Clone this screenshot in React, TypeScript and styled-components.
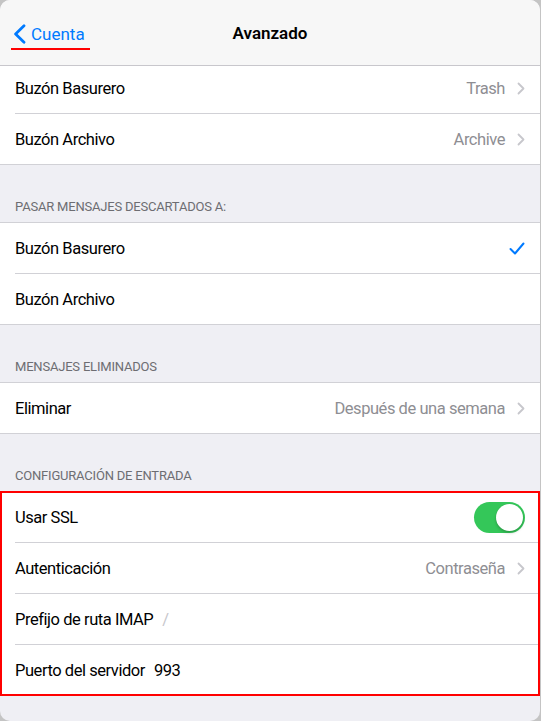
import * as React from 'react';
import styled, { createGlobalStyle } from 'styled-components';

const colors = {
  blue: '#007aff',
  green: '#34c759',
  label: '#000000',
  value: '#8e8e93',
  header: '#6d6d72',
  chevron: '#c7c7cc',
  separator: '#d1d1d6',
  groupBg: '#ffffff',
  pageBg: '#efeff4',
  navBg: '#f7f7f7',
  annotation: '#ff0000'
};

const GlobalStyle = createGlobalStyle`
  html, body {
    margin: 0;
    padding: 0;
    background: #c4c4c4;
  }
  body {
    font-family: Roboto, "Noto Sans", "Liberation Sans", sans-serif;
    -webkit-font-smoothing: antialiased;
  }
`;

interface RowData {
  label: string;
  value?: string;
  chevron?: boolean;
  checked?: boolean;
  toggle?: boolean;
  inline?: string;
  placeholder?: boolean;
}

interface SectionData {
  header?: string;
  rows: RowData[];
  highlight?: boolean;
}

const sections: SectionData[] = [
  {
    rows: [
      { label: 'Buzón Basurero', value: 'Trash', chevron: true },
      { label: 'Buzón Archivo', value: 'Archive', chevron: true }
    ]
  },
  {
    header: 'PASAR MENSAJES DESCARTADOS A:',
    rows: [{ label: 'Buzón Basurero', checked: true }, { label: 'Buzón Archivo' }]
  },
  {
    header: 'MENSAJES ELIMINADOS',
    rows: [{ label: 'Eliminar', value: 'Después de una semana', chevron: true }]
  },
  {
    header: 'CONFIGURACIÓN DE ENTRADA',
    highlight: true,
    rows: [
      { label: 'Usar SSL', toggle: true },
      { label: 'Autenticación', value: 'Contraseña', chevron: true },
      { label: 'Prefijo de ruta IMAP', inline: '/', placeholder: true },
      { label: 'Puerto del servidor', inline: '993' }
    ]
  }
];

const BackChevron = () => (
  <svg width="13" height="20" viewBox="0 0 13 20">
    <path
      d="M11 1.8 L2.6 10 L11 18.2"
      fill="none"
      stroke={colors.blue}
      strokeWidth="2.8"
      strokeLinecap="round"
      strokeLinejoin="round"
    />
  </svg>
);

const Disclosure = () => (
  <svg width="8" height="13" viewBox="0 0 8 13">
    <path
      d="M1.5 1.5 L6.5 6.5 L1.5 11.5"
      fill="none"
      stroke={colors.chevron}
      strokeWidth="1.8"
      strokeLinecap="round"
      strokeLinejoin="round"
    />
  </svg>
);

const Check = () => (
  <svg width="16" height="13" viewBox="0 0 16 13">
    <path
      d="M1.5 7 L6 11.5 L14.5 1.5"
      fill="none"
      stroke={colors.blue}
      strokeWidth="2"
      strokeLinecap="round"
      strokeLinejoin="round"
    />
  </svg>
);

const SettingsRow: React.FC<{ row: RowData }> = ({ row }) => (
  <Row>
    <RowInner>
      <Label>
        {row.label}
        {row.inline && <Inline placeholder={row.placeholder}>{row.inline}</Inline>}
      </Label>
      <Accessory>
        {row.value && <Value>{row.value}</Value>}
        {row.chevron && <Disclosure />}
        {row.checked && <Check />}
        {row.toggle && (
          <Track>
            <Knob />
          </Track>
        )}
      </Accessory>
    </RowInner>
  </Row>
);

const App: React.FC = () => (
  <>
    <GlobalStyle />
    <Card>
      <NavBar>
        <BackButton>
          <BackChevron />
          <BackText>Cuenta</BackText>
        </BackButton>
        <Title>Avanzado</Title>
        <span />
      </NavBar>
      <Scroll>
        <Content>
          {sections.map((section, i) => (
            <React.Fragment key={i}>
              {section.header && <SectionHeader>{section.header}</SectionHeader>}
              <Group highlight={section.highlight}>
                {section.rows.map(row => (
                  <SettingsRow key={row.label} row={row} />
                ))}
              </Group>
            </React.Fragment>
          ))}
        </Content>
      </Scroll>
    </Card>
  </>
);

export default App;

const Card = styled.div`
  width: 540px;
  height: 721px;
  border-radius: 10px;
  overflow: hidden;
  background: ${colors.pageBg};
  display: flex;
  flex-direction: column;
`;

const NavBar = styled.div`
  flex: 0 0 auto;
  height: 65px;
  border-bottom: 1px solid #c8c7cc;
  background: ${colors.navBg};
  display: grid;
  grid-template-columns: 1fr auto 1fr;
  align-items: center;
`;

const BackButton = styled.div`
  justify-self: start;
  margin-left: 11px;
  display: inline-flex;
  align-items: center;
  gap: 5px;
  padding: 8px 5px 3px 2px;
  border-bottom: 2px solid ${colors.annotation};
`;

const BackText = styled.span`
  font-size: 17px;
  line-height: 22px;
  color: ${colors.blue};
`;

const Title = styled.div`
  font-size: 17px;
  line-height: 22px;
  font-weight: 600;
  color: ${colors.label};
`;

const Scroll = styled.div`
  flex: 1 1 auto;
  overflow: hidden;
`;

const Content = styled.div`
  margin-top: -4px;
`;

const SectionHeader = styled.div`
  padding: 34px 15px 7px;
  font-size: 13px;
  line-height: 16px;
  letter-spacing: -0.2px;
  color: ${colors.header};
`;

const Group = styled.div<{ highlight?: boolean }>`
  background: ${colors.groupBg};
  border-top: 1px solid ${colors.separator};
  border-bottom: 1px solid ${colors.separator};
  outline: ${props => (props.highlight ? `2px solid ${colors.annotation}` : 'none')};
  outline-offset: -2px;
`;

const Row = styled.div`
  padding-left: 15px;

  &:last-child > div {
    border-bottom: none;
  }
`;

const RowInner = styled.div`
  height: 50px;
  border-bottom: 1px solid ${colors.separator};
  padding-right: 15px;
  display: flex;
  align-items: center;
  justify-content: space-between;
`;

const Label = styled.div`
  font-size: 16.5px;
  letter-spacing: -0.45px;
  color: ${colors.label};
  display: flex;
  align-items: center;
  gap: 9px;
`;

const Inline = styled.span<{ placeholder?: boolean }>`
  color: ${props => (props.placeholder ? colors.chevron : colors.label)};
`;

const Accessory = styled.div`
  display: flex;
  align-items: center;
  gap: 12px;
`;

const Value = styled.span`
  font-size: 16.5px;
  letter-spacing: -0.45px;
  color: ${colors.value};
`;

const Track = styled.div`
  width: 51px;
  height: 31px;
  box-sizing: border-box;
  padding: 2px;
  border-radius: 16px;
  background: ${colors.green};
  display: flex;
  justify-content: flex-end;
`;

const Knob = styled.div`
  width: 27px;
  height: 27px;
  border-radius: 50%;
  background: #ffffff;
  box-shadow: 0 2px 3px rgba(0, 0, 0, 0.2), 0 0 1px rgba(0, 0, 0, 0.15);
`;
